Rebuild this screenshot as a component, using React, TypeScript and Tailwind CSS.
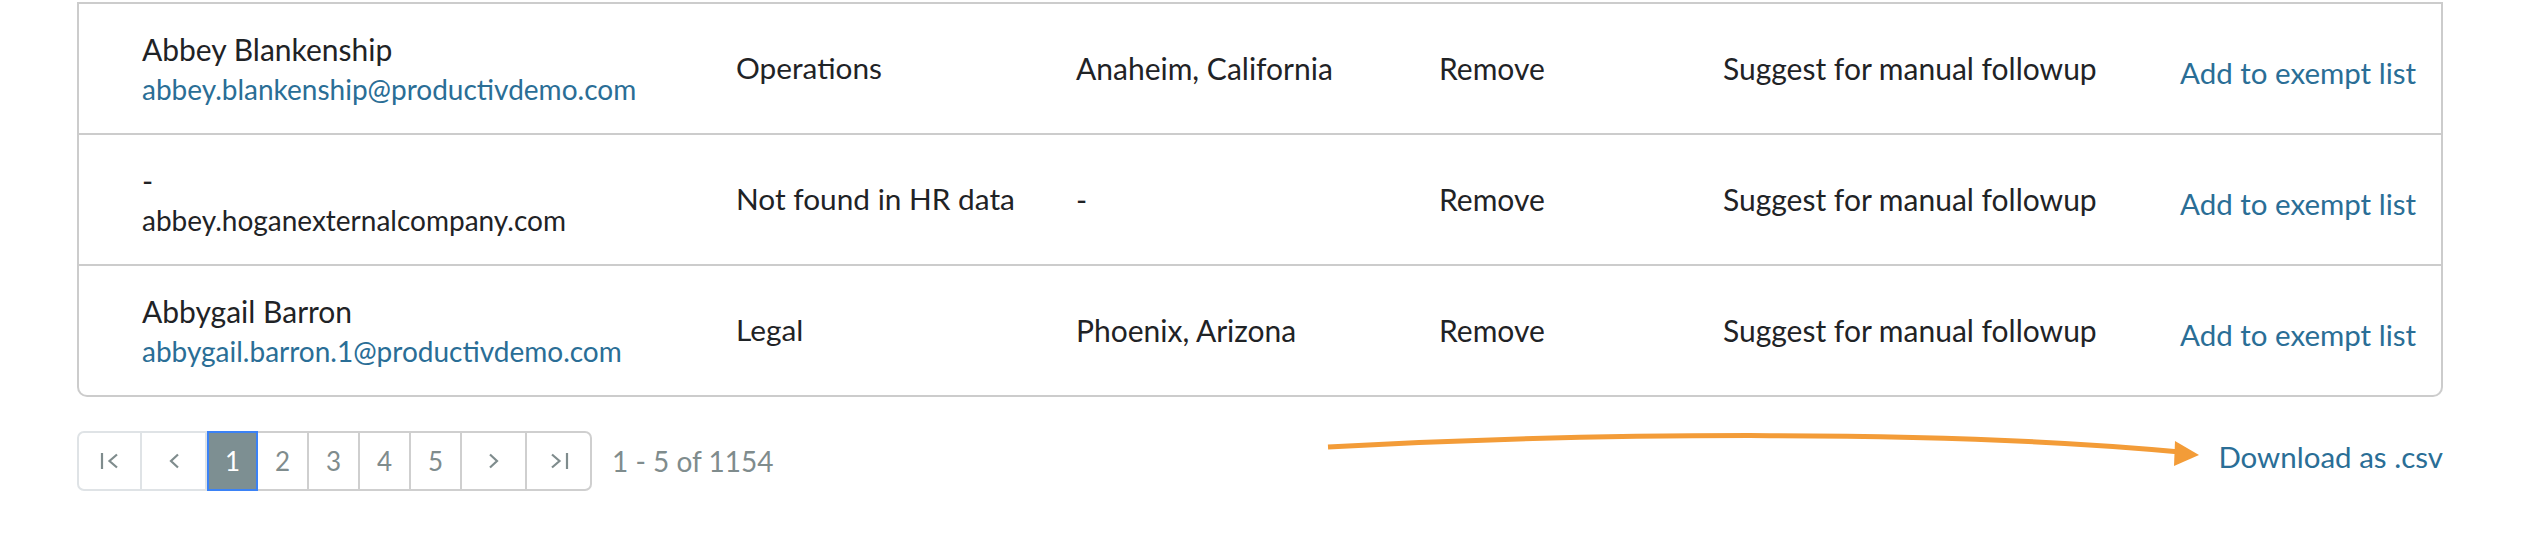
import { ReactNode } from 'react';

type Row = {
  name: string;
  email: string;
  emailIsLink: boolean;
  dept: string;
  location: string;
  action: string;
  suggestion: string;
};

const rows: Row[] = [
  {
    name: 'Abbey Blankenship',
    email: 'abbey.blankenship@productivdemo.com',
    emailIsLink: true,
    dept: 'Operations',
    location: 'Anaheim, California',
    action: 'Remove',
    suggestion: 'Suggest for manual followup',
  },
  {
    name: '-',
    email: 'abbey.hoganexternalcompany.com',
    emailIsLink: false,
    dept: 'Not found in HR data',
    location: '-',
    action: 'Remove',
    suggestion: 'Suggest for manual followup',
  },
  {
    name: 'Abbygail Barron',
    email: 'abbygail.barron.1@productivdemo.com',
    emailIsLink: true,
    dept: 'Legal',
    location: 'Phoenix, Arizona',
    action: 'Remove',
    suggestion: 'Suggest for manual followup',
  },
];

function PageButton({
  children,
  active,
  muted,
  wide,
  first,
  last,
}: {
  children: ReactNode;
  active?: boolean;
  muted?: boolean;
  wide?: boolean;
  first?: boolean;
  last?: boolean;
}) {
  return (
    <button
      className={`flex h-full items-center justify-center border-y-2 border-r-2 text-[26px] leading-none ${
        wide ? 'w-[65px]' : 'w-[51px]'
      } ${first ? 'border-l-2 rounded-l-[7px]' : ''} ${last ? 'rounded-r-[7px]' : ''} ${
        active
          ? 'border-2 border-[#3b82f6] bg-[#7d8f92] text-white'
          : muted
            ? 'border-[#dfe3e6] text-[#7f8c8d]'
            : 'border-[#cfcfcf] text-[#7f8c8d]'
      }`}
    >
      {children}
    </button>
  );
}

export default function App() {
  return (
    <div
      className="relative h-[551px] w-[2530px] overflow-hidden bg-white text-[#1f2326]"
      style={{ fontFamily: 'Lato, "Open Sans", sans-serif' }}
    >
      <div className="pl-[77px] pr-[87px] pt-[2px]">
        {/* Table, first rows scrolled out above */}
        <div className="rounded-b-[10px] border-x-2 border-b-2 border-[#cccccc]">
          {rows.map((row, i) => (
            <div
              key={i}
              className="grid h-[131px] grid-cols-[657px_340px_363px_284px_457px_1fr] items-center border-t-2 border-[#cccccc] text-[30px]"
            >
              <div className="pl-[63px]">
                <div className="text-[30px] leading-[40px]">{row.name}</div>
                <div
                  className={`text-[28px] leading-[40px] ${
                    row.emailIsLink ? 'text-[#2a6e96]' : 'text-[#1f2326]'
                  }`}
                >
                  {row.email}
                </div>
              </div>
              <div className="text-[29.8px]">{row.dept}</div>
              <div>{row.location}</div>
              <div>{row.action}</div>
              <div>{row.suggestion}</div>
              <div className="pt-[8px]">
                <a className="cursor-pointer text-[29.5px] text-[#2a6e96]">Add to exempt list</a>
              </div>
            </div>
          ))}
        </div>

        {/* Footer: pagination and export */}
        <div className="mt-[34px] flex items-center justify-between">
          <div className="flex items-center gap-[20px]">
            <div className="flex h-[60px]">
              <PageButton muted wide first>
                <svg width="20" height="18" viewBox="0 0 20 18" fill="none" stroke="#7f8c8d" strokeWidth="2.2">
                  <path d="M2 1v16" />
                  <path d="M17 2.5 9.5 9 17 15.5" />
                </svg>
              </PageButton>
              <PageButton muted wide>
                <svg width="12" height="16" viewBox="0 0 12 16" fill="none" stroke="#7f8c8d" strokeWidth="2.2">
                  <path d="M10 1.5 3 8l7 6.5" />
                </svg>
              </PageButton>
              <PageButton active>1</PageButton>
              <PageButton>2</PageButton>
              <PageButton>3</PageButton>
              <PageButton>4</PageButton>
              <PageButton>5</PageButton>
              <PageButton wide>
                <svg width="12" height="16" viewBox="0 0 12 16" fill="none" stroke="#7f8c8d" strokeWidth="2.2">
                  <path d="M2 1.5 9 8l-7 6.5" />
                </svg>
              </PageButton>
              <PageButton wide last>
                <svg width="20" height="18" viewBox="0 0 20 18" fill="none" stroke="#7f8c8d" strokeWidth="2.2">
                  <path d="M3 2.5 10.5 9 3 15.5" />
                  <path d="M18 1v16" />
                </svg>
              </PageButton>
            </div>
            <span className="text-[28px] text-[#7f8c8d]">1 - 5 of 1154</span>
          </div>
          <a className="mb-[8px] cursor-pointer text-[29.5px] text-[#2a6e96]">Download as .csv</a>
        </div>
      </div>

      {/* Annotation arrow pointing at the export link */}
      <svg className="pointer-events-none absolute left-0 top-0" width="2530" height="551">
        <path d="M1328 447 C 1600 432, 1950 430, 2180 452" fill="none" stroke="#f39c38" strokeWidth="5" />
        <polygon points="2199,455 2175,441 2174,466" fill="#f39c38" />
      </svg>
    </div>
  );
}
